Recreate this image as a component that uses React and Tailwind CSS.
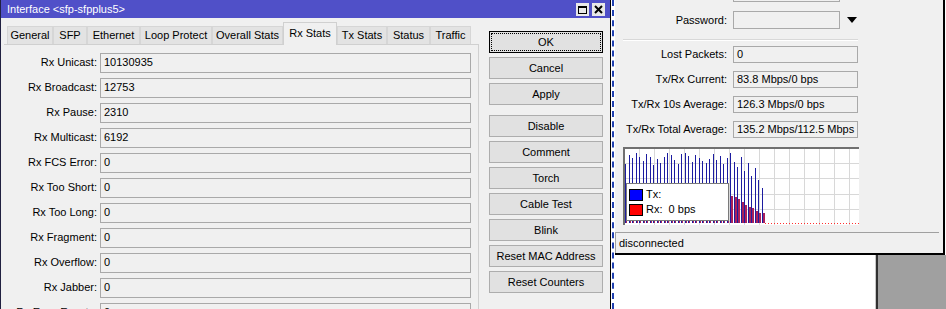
import React from "react";

const leftRows = [
  ["Rx Unicast:", "10130935"],
  ["Rx Broadcast:", "12753"],
  ["Rx Pause:", "2310"],
  ["Rx Multicast:", "6192"],
  ["Rx FCS Error:", "0"],
  ["Rx Too Short:", "0"],
  ["Rx Too Long:", "0"],
  ["Rx Fragment:", "0"],
  ["Rx Overflow:", "0"],
  ["Rx Jabber:", "0"],
  ["Rx Error Events:", "0"],
];

const tabs = [
  ["General", 46],
  ["SFP", 34],
  ["Ethernet", 53],
  ["Loop Protect", 72],
  ["Overall Stats", 71],
  ["Rx Stats", 54],
  ["Tx Stats", 50],
  ["Status", 43],
  ["Traffic", 41],
];

const buttonsA = ["Cancel", "Apply"];
const buttonsB = ["Disable", "Comment", "Torch", "Cable Test", "Blink", "Reset MAC Address", "Reset Counters"];

const rightRows = [
  ["Lost Packets:", "0"],
  ["Tx/Rx Current:", "83.8 Mbps/0 bps"],
  ["Tx/Rx 10s Average:", "126.3 Mbps/0 bps"],
  ["Tx/Rx Total Average:", "135.2 Mbps/112.5 Mbps"],
];

const txTops = [15, 6, 9, 4, 8, 12, 5, 8, 16, 10, 14, 8, 4, 6, 11, 15, 5, 4, 7, 13, 6, 9, 12, 14, 10, 5, 11, 7, 15, 9, 4, 13, 18, 8, 22, 14, 27, 19, 31, 39];
const rxHigh = [49, 50, 52, 55, 58, 60, 61, 64, 66, 66];

function Chart() {
  const vLines = [];
  for (let k = 1; k <= 15; k++) vLines.push(1 + 15 * k);
  const hLines = [16, 31, 47, 62];
  return (
    <div className="relative ml-[8px] mt-[9px] w-[236px] h-[78px] bg-white">
      <svg width="236" height="78" className="absolute left-0 top-0" shapeRendering="crispEdges">
        {vLines.map((x) => (
          <line key={"v" + x} x1={x + 0.5} y1="0" x2={x + 0.5} y2="78" stroke="#d8d8d8" strokeWidth="1" />
        ))}
        {hLines.map((y) => (
          <line key={"h" + y} x1="0" y1={y + 0.5} x2="236" y2={y + 0.5} stroke="#d8d8d8" strokeWidth="1" />
        ))}
        {txTops.map((t, i) => {
          const x = Math.round(2 + i * 3.5);
          return <rect key={"t" + i} x={x} y={t + 2} width="1" height={76 - t - 2} fill="#1c1ca0" />;
        })}
        {txTops.map((t, i) => {
          const x = Math.round(2 + i * 3.5) + 1;
          const top = i >= 30 ? rxHigh[i - 30] : 73;
          return <rect key={"r" + i} x={x} y={top} width={i >= 30 ? 2 : 1} height={76 - top} fill="#a8205c" />;
        })}
        <line x1="142" y1="76.5" x2="236" y2="76.5" stroke="#ff3030" strokeWidth="1" strokeDasharray="1 2" />
        <rect x="0" y="0" width="236" height="2" fill="#707070" />
        <rect x="0" y="0" width="2" height="78" fill="#707070" />
      </svg>
      <div className="absolute left-[3px] top-[36px] w-[103px] h-[38px] bg-white border border-[#7a7a7a] flex flex-col justify-center gap-[3px] pl-[2px]">
        <div className="flex items-center h-[12px]">
          <div className="w-[14px] h-[12px] bg-[#0000ff] border border-black" />
          <span className="ml-[3px] text-[11px] leading-none text-black">Tx:</span>
        </div>
        <div className="flex items-center h-[12px]">
          <div className="w-[14px] h-[12px] bg-[#ff0000] border border-black" />
          <span className="ml-[3px] text-[11px] leading-none text-black whitespace-pre">Rx:  0 bps</span>
        </div>
      </div>
    </div>
  );
}

function Btn({ label, focused }) {
  if (focused) {
    return (
      <div className="h-[22px] border border-black bg-[#e1e1e1] p-[1px]">
        <div className="h-full border border-dotted border-black flex items-center justify-center text-[11px] text-black">
          {label}
        </div>
      </div>
    );
  }
  return (
    <div className="h-[22px] border border-[#adadad] bg-[#e1e1e1] flex items-center justify-center text-[11px] text-black">
      {label}
    </div>
  );
}

export default function App() {
  return (
    <div className="w-[946px] h-[309px] overflow-hidden flex bg-white font-['Liberation_Sans',Arial,sans-serif] text-[11px] text-black">
      {/* Left window */}
      <div className="w-[610px] h-[309px] flex flex-col bg-[#f0f0f0] border-l border-[#202040] shrink-0">
        <div className="h-[18px] bg-[#5050c8] flex items-center justify-between pl-[6px] pr-[5px] shrink-0">
          <span className="text-white text-[11px] leading-none">Interface &lt;sfp-sfpplus5&gt;</span>
          <div className="flex gap-[3px] mt-[1px]">
            <div className="w-[13px] h-[13px] bg-[#e8e8e8] flex items-center justify-center">
              <div className="w-[9px] h-[8px] border border-black border-t-2" />
            </div>
            <div className="w-[13px] h-[13px] bg-[#e8e8e8] flex items-center justify-center">
              <svg width="9" height="9" viewBox="0 0 9 9">
                <path d="M1 1 L8 8 M8 1 L1 8" stroke="black" strokeWidth="2" />
              </svg>
            </div>
          </div>
        </div>
        <div className="flex flex-1">
          <div className="w-[478px] flex flex-col shrink-0">
            <div className="flex items-end h-[22px] mt-[4px] pl-[6px] relative z-10">
              {tabs.map(([t, w]) =>
                t === "Rx Stats" ? (
                  <div
                    key={t}
                    style={{ width: w }}
                    className="h-[23px] -mb-px bg-[#f0f0f0] border border-b-0 border-[#d0d0d0] flex items-center justify-center pb-[2px] text-[11px]"
                  >
                    {t}
                  </div>
                ) : (
                  <div
                    key={t}
                    style={{ width: w }}
                    className="h-[18px] bg-[#e3e3e3] border border-b-0 border-[#d6d6d6] flex items-center justify-center text-[11px]"
                  >
                    {t}
                  </div>
                )
              )}
            </div>
            <div className="ml-[3px] flex-1 border-t border-r border-[#d0d0d0] pt-[5px]">
              {leftRows.map(([l, v]) => (
                <div key={l} className="flex items-center h-[25px]">
                  <div className="w-[93px] text-right">{l}</div>
                  <div className="ml-[3px] w-[371px] h-[20px] border border-[#a9a9a9] bg-[#f0f0f0] flex items-center pl-[3px]">
                    {v}
                  </div>
                </div>
              ))}
            </div>
          </div>
          <div className="ml-[10px] mt-[13px] w-[114px] flex flex-col shrink-0">
            <Btn label="OK" focused />
            {buttonsA.map((b) => (
              <div key={b} className="mt-[4px]">
                <Btn label={b} />
              </div>
            ))}
            <div className="mt-[10px] flex flex-col gap-[4px]">
              {buttonsB.map((b) => (
                <Btn key={b} label={b} />
              ))}
            </div>
          </div>
        </div>
      </div>
      {/* window frame strip */}
      <div className="w-[5px] h-[309px] flex shrink-0 bg-white">
        <div className="w-[1px] bg-black" />
        <div className="w-[1px] bg-white" />
        <div className="w-[2px] border-l-2 border-dashed border-[#2040b0]" />
      </div>
      {/* Right column */}
      <div className="flex-1 flex flex-col">
        <div className="w-[330px] h-[255px] bg-[#f0f0f0] border-r-2 border-b-2 border-black flex flex-col shrink-0">
          <div className="ml-[118px] w-[107px] h-[2px] border-x border-b border-[#a9a9a9] bg-[#f0f0f0]" />
          <div className="flex items-center h-[18px] mt-[9px]">
            <div className="w-[112px] text-right">Password:</div>
            <div className="ml-[6px] w-[107px] h-[18px] border border-[#a9a9a9] bg-[#f0f0f0]" />
            <svg width="10" height="6" viewBox="0 0 10 6" className="ml-[7px]">
              <path d="M0 0 L10 0 L5 6 Z" fill="black" />
            </svg>
          </div>
          <div className="mt-[10px] ml-[8px] w-[235px] h-[2px] border-t border-[#d8d8d8] border-b border-b-white" />
          <div className="mt-[5px] flex flex-col gap-[8px]">
            {rightRows.map(([l, v]) => (
              <div key={l} className="flex items-center h-[17px]">
                <div className="w-[112px] text-right whitespace-nowrap">{l}</div>
                <div className="ml-[6px] w-[125px] h-[17px] border border-[#a9a9a9] bg-[#f0f0f0] flex items-center pl-[3px] whitespace-nowrap">
                  {v}
                </div>
              </div>
            ))}
          </div>
          <Chart />
          <div className="mt-[7px] w-[324px] h-[21px] border-t border-l border-[#a0a0a0] flex items-center pl-[3px]">
            disconnected
          </div>
        </div>
        <div className="flex flex-1">
          <div className="w-[260px] bg-white" />
          <div className="w-[1px] bg-[#c8c8c8]" />
          <div className="w-[2px] bg-[#303030]" />
          <div className="flex-1 bg-[#a0a0a0]" />
        </div>
      </div>
    </div>
  );
}
